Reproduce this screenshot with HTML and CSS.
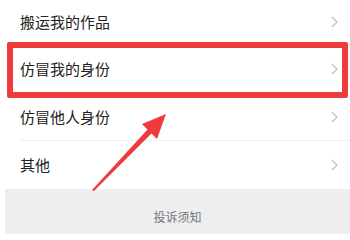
FILE: index.html
```html
<!DOCTYPE html>
<html lang="zh">
<head>
<meta charset="utf-8">
<link rel="stylesheet" href="styles.css">
</head>
<body>
<div class="page">
  <ul class="list">
    <li class="row first"><span class="label">搬运我的作品</span><svg class="chev" width="7" height="12" viewBox="0 0 7 12"><path d="M1 1 L6 6 L1 11" fill="none" stroke="#bdbdbd" stroke-width="1.2"/></svg></li>
    <li class="row"><span class="label">仿冒我的身份</span><svg class="chev" width="7" height="12" viewBox="0 0 7 12"><path d="M1 1 L6 6 L1 11" fill="none" stroke="#bdbdbd" stroke-width="1.2"/></svg></li>
    <li class="row"><span class="label">仿冒他人身份</span><svg class="chev" width="7" height="12" viewBox="0 0 7 12"><path d="M1 1 L6 6 L1 11" fill="none" stroke="#bdbdbd" stroke-width="1.2"/></svg></li>
    <li class="row last"><span class="label">其他</span><svg class="chev" width="7" height="12" viewBox="0 0 7 12"><path d="M1 1 L6 6 L1 11" fill="none" stroke="#bdbdbd" stroke-width="1.2"/></svg></li>
  </ul>
  <div class="footer">投诉须知</div>
  <div class="highlight"></div>
  <svg class="arrow" width="350" height="234" viewBox="0 0 350 234">
    <polygon points="166,114 157,139 151.5,133.5 94,191 92,190 147.5,129.5 142,124" fill="#ef3b3e"/>
  </svg>
</div>
</body>
</html>
```

FILE: styles.css
```css
html, body {
  margin: 0;
  padding: 0;
  background: #ffffff;
}
.page {
  position: relative;
  width: 350px;
  height: 234px;
  overflow: hidden;
  font-family: "Noto Sans CJK SC", "Noto Sans", sans-serif;
}
.list {
  list-style: none;
  margin: 0;
  padding: 0;
}
.row {
  display: flex;
  align-items: center;
  justify-content: space-between;
  height: 48px;
  margin-left: 20px;
  padding-right: 12px;
  border-bottom: 1px solid #f1f1f1;
  box-sizing: border-box;
}
.row.first {
  height: 45px;
}
.row.last {
  border-bottom: none;
}
.label {
  font-size: 15px;
  color: #222222;
  line-height: 20px;
}
.chev {
  display: block;
}
.footer {
  margin-left: 5px;
  height: 45px;
  background: #eeeeee;
  box-sizing: border-box;
  padding-top: 20px;
  text-align: center;
  font-size: 12px;
  line-height: 16px;
  color: #6e7480;
}
.highlight {
  position: absolute;
  left: 7px;
  top: 42px;
  width: 341px;
  height: 56px;
  border: 6px solid #ef3b3e;
  box-sizing: border-box;
  border-radius: 2px;
}
.arrow {
  position: absolute;
  left: 0;
  top: 0;
}
```
